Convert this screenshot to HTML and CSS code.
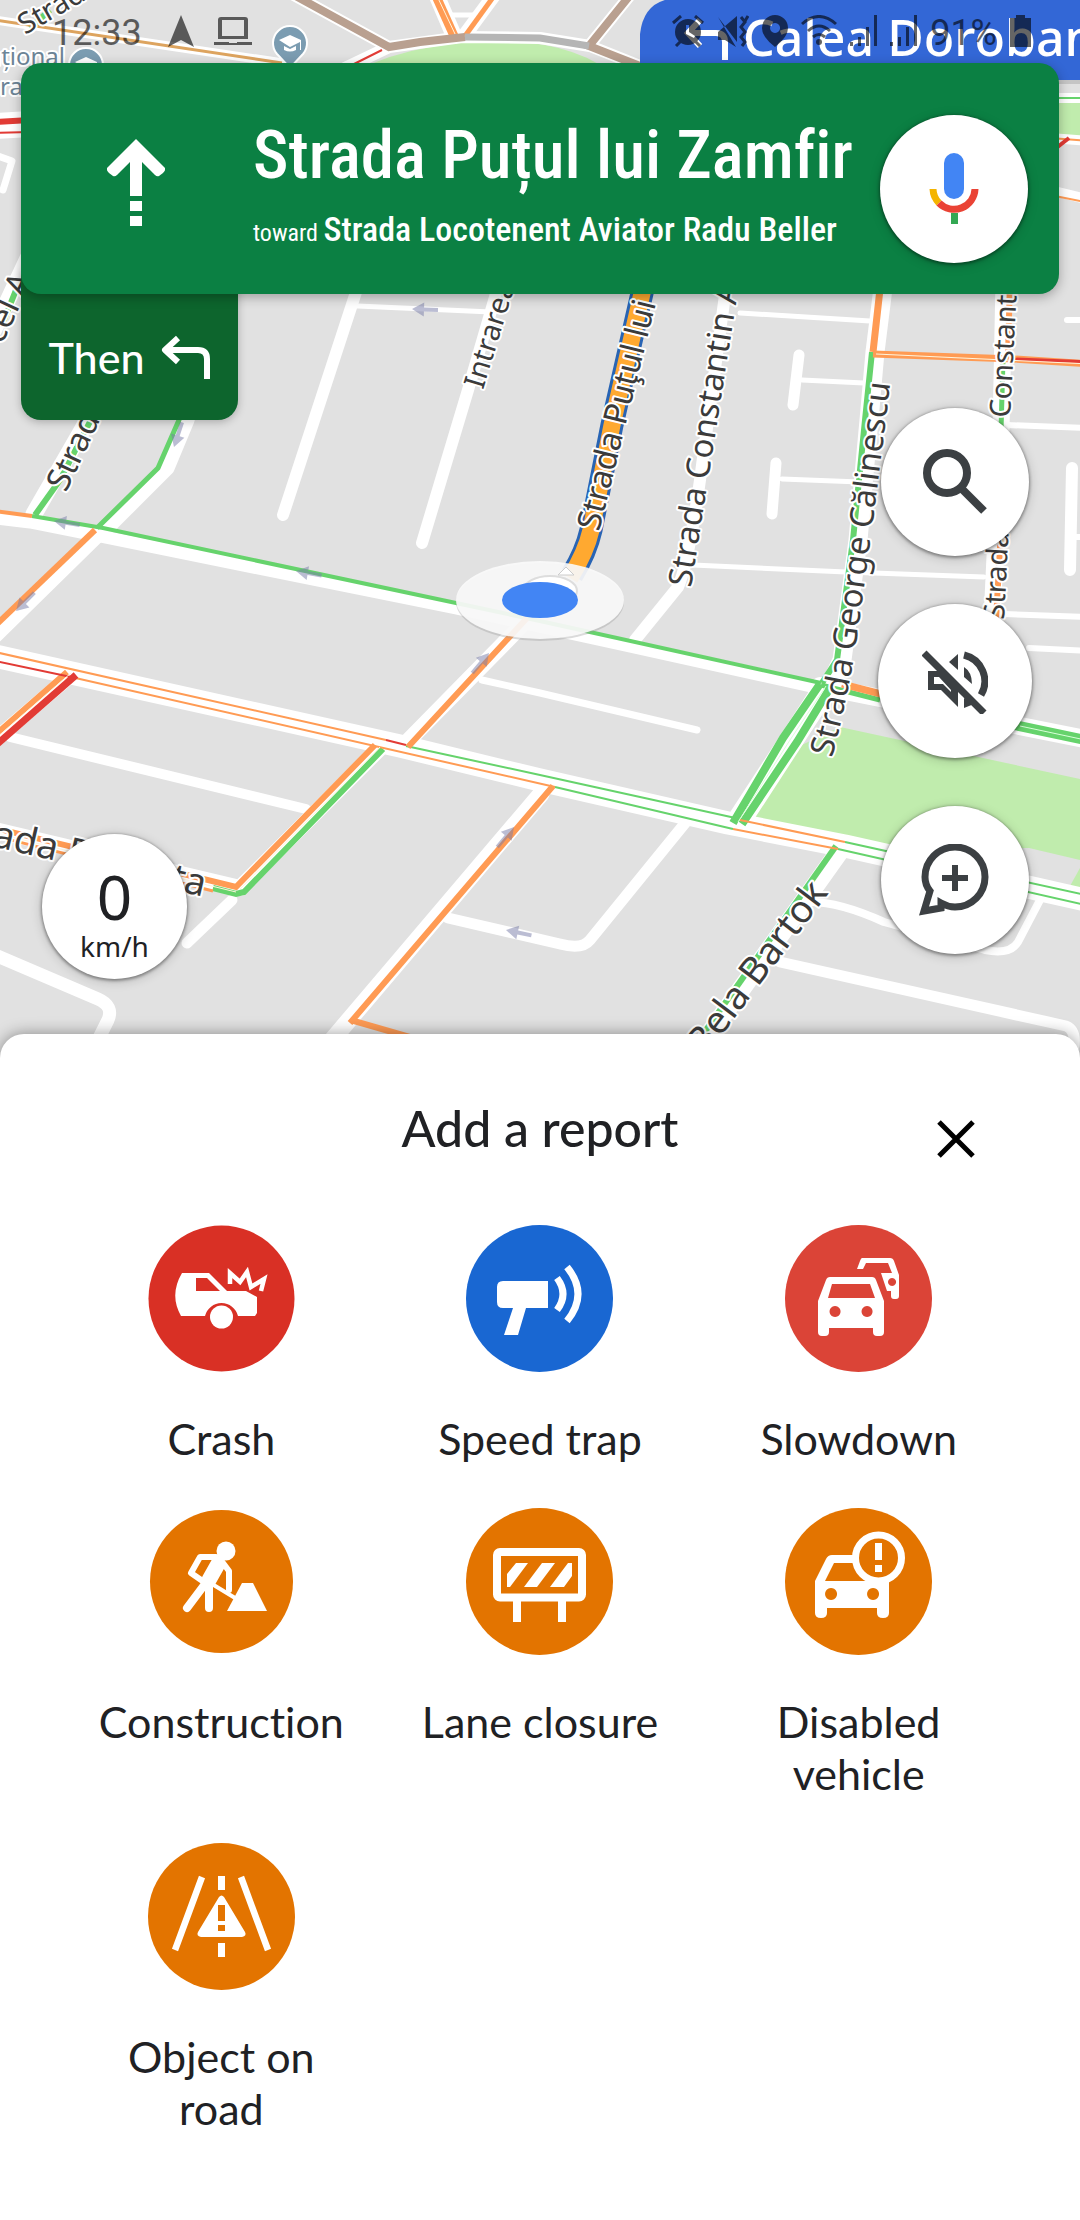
FILE: index.html
```html
<!DOCTYPE html>
<html lang="en">
<head>
<meta charset="utf-8">
<meta name="viewport" content="width=device-width, initial-scale=1">
<title>Navigation – Add a report</title>
<link rel="stylesheet" href="styles.css">
</head>
<body>
<main class="app">
  <section class="map-view" aria-label="Navigation map">
    <svg class="map" viewBox="0 0 1080 1060" preserveAspectRatio="xMidYMin slice" aria-hidden="true">
      <defs>
        <path id="dir" d="M0 0l12-7v5h14v4h-14v5z"/>
        <path id="george" d="M832 758Q847 702 856 645Q874 520 893 360"/>
      </defs>
      <rect width="1080" height="1060" fill="#e1e1e1"/>

      <!-- parks -->
      <g fill="#c0ecad">
        <path d="M340 80Q400 42 500 41Q580 42 620 80z"/>
        <path d="M1050 102h30v34h-30z"/>
        <path d="M840 727L1080 779V860L1029 848L884 850L750 822L791 750z"/>
        <path d="M1080 868l-10 18 10 4z"/>
      </g>

      <!-- streets -->
      <g class="street">
        <path stroke-width="13" d="M-5 518L30 522L100 536L456 608L625 645L820 688"/>
        <path stroke-width="18" d="M820 686L1090 740"/>
        <path stroke-width="23" d="M-5 656L400 746L540 780L728 823L845 846L1090 901"/>
        <path stroke-width="16" d="M527 620L404 745"/>
        <path stroke-width="15" d="M100 533L-5 636"/>
        <path stroke-width="15" d="M210 350L187 420L167 468L102 533"/>
        <path stroke-width="17" d="M120 350L88 420L34 514"/>
        <path stroke-width="16" d="M36 240L-6 330"/>
        <path stroke-width="12" d="M360 280L283 515"/>
        <path stroke-width="12" d="M500 280L468 390L422 543"/>
        <path stroke-width="5" d="M358 306L491 312"/>
        <path stroke-width="12" d="M727 280L700 480Q688 565 678 587L635 640"/>
        <path stroke-width="5" d="M740 313L870 321M802 380L864 383M782 479L860 482M693 565L846 572L984 577"/>
        <path stroke-width="11" d="M799 355L793 405M776 463L772 514"/>
        <path stroke-width="19" d="M884 280L875 352L869 420L858 540L842 660L828 690"/>
        <path stroke-width="17" d="M1004 280L1001 430L992 620"/>
        <path stroke-width="6" d="M1006 425L1090 428M1003 614L1090 617M1029 648L1090 651M1067 320h20M1070 537h20"/>
        <path stroke-width="12" d="M1072 468L1070 570"/>
        <path stroke-width="7" d="M482 680L540 693L697 730"/>
        <path stroke-width="24" d="M824 690L738 822"/>
        <path stroke-width="19" d="M839 852L705 1040"/>
        <path stroke-width="11" d="M448 918L560 944Q582 950 590 940L686 822"/>
        <path stroke-width="17" d="M541 794L332 1040"/>
        <path stroke-width="10" d="M10 737L306 809"/>
        <path stroke-width="15" d="M71 675L-5 740"/>
        <path stroke-width="16" d="M-5 830L240 888L380 748"/>
        <path stroke-width="11" d="M232 900L187 943"/>
        <path stroke-width="13" d="M-5 955L98 999Q114 1006 108 1020L96 1044"/>
        <path stroke-width="8" d="M810 902Q840 902 884 922L985 950Q1010 955 1018 942L1040 900"/>
        <path stroke-width="11" d="M780 962L1066 1026Q1076 1030 1074 1046"/>
        <path stroke-width="9" d="M-5 20L290 64"/>
        <path stroke-width="12" d="M292 -6L389 47L462 37L540 38L590 46L640 66M589 46L631 -6M389 47L345 68"/>
        <path stroke-width="16" d="M436 -6L454 36"/>
        <path stroke-width="14" d="M495 -6L464 36"/>
        <path stroke-width="5" d="M448 15h32"/>
        <path stroke-width="26" d="M-5 126L30 124"/>
        <path stroke-width="7" d="M-5 155L12 161L3 190"/>
        <path stroke-width="10" d="M1050 98h40M1050 138L1090 141M1050 190L1090 200"/>
      </g>

      <!-- live traffic -->
      <g class="traffic green">
        <path stroke-width="4" d="M32 516L103 528L456 603L540 621L821 683"/>
        <path stroke-width="5" d="M200 350L179 420L158 468L97 528"/>
        <path stroke-width="6" d="M96 410L60 480L35 515M16 290L2 325M30 28L50 10"/>
        <path stroke-width="5" d="M821 685L880 700"/>
        <path stroke-width="10" d="M1010 724L1090 741"/>
        <path stroke-width="6" d="M872 352L865 420L853 540L837 660L822 683"/>
        <path stroke-width="8" d="M820 684L783 738L733 823M830 688L797 742L742 824"/>
        <path stroke-width="2" d="M406 746L540 775L740 819M555 787L733 829M845 842L1090 896M838 849L1090 906"/>
        <path stroke-width="6" d="M836 846L699 1040"/>
        <path stroke-width="6" d="M383 749L244 892L236 894L213 888"/>
        <path stroke-width="5" d="M1003 360L1001 430"/>
        <path stroke-width="2" d="M1050 98h40"/>
      </g>
      <g class="traffic orange">
        <path stroke-width="4" d="M-5 511L32 516"/>
        <path stroke-width="6" d="M95 530L-5 626"/>
        <path stroke-width="2" d="M-5 652L386 740M71 677L555 787M740 820L845 842M733 829L838 849"/>
        <path stroke-width="6" d="M527 618L408 747M553 786L350 1023M354 1021L420 1040M67 672L-5 735"/>
        <path stroke-width="6" d="M375 745L236 887L-5 828"/>
        <path stroke-width="3" d="M213 891L-5 836"/>
        <path stroke-width="7" d="M881 280L873 352M842 684L885 695"/>
        <path stroke-width="7" d="M873 354L1014 359L1090 364"/>
        <path stroke-width="6" d="M1010 280L1008 355M1001 530L996 620"/>
        <path stroke-width="9" d="M436 -4L454 36"/>
        <path stroke-width="5" d="M494 -4L465 36"/>
        <path stroke-width="2" d="M1050 138L1090 141M1050 195L1090 203"/>
      </g>
      <g class="traffic red">
        <path stroke-width="2" d="M-5 661L71 677M386 740L406 745M382 50L350 66M-5 133L30 132"/>
        <path stroke-width="7" d="M76 675L-5 746"/>
        <path stroke-width="3" d="M1013 359L1090 362"/>
        <path stroke-width="6" d="M-5 122L30 120"/>
        <path stroke-width="4" d="M1055 149L1069 138"/>
      </g>
      <g fill="none" stroke="#fff4dc">
        <path d="M876 354L1090 364M437 -4L456 36M71 673L-5 739M236 892L-5 833M380 747L240 889"/>
        <path stroke="#d9ffd9" d="M826 686L790 740L738 822M1020 726L1090 741"/>
      </g>
      <path d="M-5 20L282 63" stroke="#dda45f" stroke-width="3" fill="none"/>
      <path d="M292 -6L389 47L420 42L465 37M631 -6L589 46L640 66" stroke="#b9a090" stroke-width="8" fill="none"/>
      <path d="M465 37L540 38L589 46" stroke="#b5b5b5" stroke-width="7" fill="none"/>

      <!-- active route -->
      <path d="M645 280L612 425L591 530Q586 552 572 575" fill="none" stroke="#2864b4" stroke-width="23"/>
      <path d="M645 280L612 425L591 530Q586 552 570 578" fill="none" stroke="#ffa930" stroke-width="17"/>

      <!-- one-way markers -->
      <g fill="#777ca8" fill-opacity=".5">
        <use href="#dir" transform="translate(412 309) rotate(2)"/>
        <use href="#dir" transform="translate(54 521) rotate(9)"/>
        <use href="#dir" transform="translate(296 571) rotate(10)"/>
        <use href="#dir" transform="translate(174 447) rotate(-72)"/>
        <use href="#dir" transform="translate(16 611) rotate(-45)"/>
        <use href="#dir" transform="translate(489 653) rotate(130)"/>
        <use href="#dir" transform="translate(514 827) rotate(130)"/>
        <use href="#dir" transform="translate(506 930) rotate(12)"/>
      </g>

      <!-- street names -->
      <g class="street-name">
        <text transform="translate(599 532) rotate(-76)">Strada Puţul lui</text>
        <text transform="translate(691 588) rotate(-81)">Strada Constantin A</text>
        <text><textPath href="#george">Strada George Călinescu</textPath></text>
        <g class="small">
          <text transform="translate(1010 418) rotate(-87)">Constantin</text>
          <text transform="translate(1004 620) rotate(-87)">Strada</text>
          <text transform="translate(483 390) rotate(-73)">Intrarea</text>
          <text transform="translate(25 35) rotate(-30)">Strada</text>
        </g>
        <text transform="translate(66 493) rotate(-65)">Strada</text>
        <text transform="translate(2 345) rotate(-65)">cel A</text>
        <g class="large">
          <text transform="translate(-9 846) rotate(13)">ada B</text>
          <text transform="translate(169 889) rotate(13)">ta</text>
          <text text-anchor="end" transform="translate(829 893) rotate(-53)">Bela Bartok</text>
        </g>
      </g>
      <g class="place-name">
        <text x="65" y="65" text-anchor="end">ațional</text>
        <text x="0" y="95">rag</text>
      </g>

      <!-- school pins -->
      <g id="pin" fill="#7b9cb1" stroke="#fff" stroke-width="2">
        <path d="M290 68L277 54A17 17 0 1 1 303 54z"/>
        <path stroke="none" fill="#fff" d="M279 40l11-5 11 5v10h-1V42l-10 5zM284 46l6 3 6-3v4q-6 3-12 0z"/>
      </g>
      <use href="#pin" x="-204" y="22"/>

      <!-- next-turn callout -->
      <path d="M640 80V34Q644 -2 680 -2H1090V80z" fill="#3367d6"/>
      <path d="M640 82H1090" stroke="#000" stroke-opacity=".12" stroke-width="4"/>
      <path d="M700 20L688 33L700 46M690 33H716Q725 33 725 42V60" fill="none" stroke="#fff" stroke-width="6"/>
      <text class="callout" x="743" y="56">Calea Dorobanți</text>

      <!-- vehicle position -->
      <ellipse cx="540" cy="602" rx="84" ry="39" fill="#999" fill-opacity=".35"/>
      <ellipse cx="540" cy="600" rx="84" ry="39" fill="#fbfbfb" fill-opacity=".9"/>
      <ellipse cx="550" cy="591" rx="27" ry="15" fill="#fff" stroke="#ddd" stroke-width="2"/>
      <path d="M566 567l8 8h-16z" fill="#fff" stroke="#ccc"/>
      <ellipse cx="540" cy="600" rx="38" ry="18" fill="#4285f4"/>
    </svg>

    <div class="status-bar">
      <div class="status-group">
        <span class="clock">12:33</span>
        <svg class="status-nav" viewBox="0 0 26 32"><path d="M13 0L26 32L13 25L0 32z"/></svg>
        <svg class="status-laptop" viewBox="0 0 38 28"><path fill-rule="evenodd" d="M7 0H31Q34 0 34 3V22H4V3Q4 0 7 0zM8 3V19H30V3zM0 25H15V26H23V25H38V28H0z"/></svg>
      </div>
      <div class="status-group status-right">
        <svg width="32" height="32" viewBox="0 0 32 32"><path fill-rule="evenodd" d="M16 4a13 13 0 1 1 0 26 13 13 0 1 1 0-26zM14 10v9l8 4 1-2-6-4V10z"/><path d="M1 8L9 1M31 8L23 1M4 31l5-5M28 31l-5-5" stroke="#000" stroke-width="3"/></svg>
        <svg width="32" height="32" viewBox="0 0 32 32"><path d="M1 2L20 27V1L1 17V25H8L19 32z"/><path d="M24 2l4 5-4 5 4 5-4 5 4 5-3 4M31 1l-3 5" fill="none" stroke="#000" stroke-width="3"/></svg>
        <svg width="26" height="32" viewBox="0 0 26 32"><path fill-rule="evenodd" d="M13 0A13 13 0 0 1 26 13Q26 22 13 32Q0 22 0 13A13 13 0 0 1 13 0zM13 8a5 5 0 1 0 .1 0z"/></svg>
        <svg width="36" height="32" viewBox="0 0 36 32"><path d="M1 9Q18-6 35 9M7 16Q18 6 29 16M12 22Q18 17 24 22" fill="none" stroke="#000" stroke-width="3"/><circle cx="18" cy="27" r="3"/></svg>
        <svg width="27" height="32" viewBox="0 0 27 32"><path d="M0 27h3v4H0zM8 22h3v9H8zM16 12h3v19h-3zM24 0h3v31h-3z"/></svg>
        <svg width="27" height="32" viewBox="0 0 27 32"><path d="M0 27h3v4H0zM8 22h3v9H8zM16 12h3v19h-3zM24 0h3v31h-3z"/></svg>
        <span class="clock">91%</span>
        <svg width="21" height="32" viewBox="0 0 21 32"><path d="M6 0h9v3h6v29H0V3h6z"/></svg>
      </div>
    </div>

    <header class="banner">
      <svg class="banner-arrow" viewBox="0 0 58 88" aria-label="Continue straight"><path d="M29 0L58 29Q59 31 56 34L52 37Q50 38 48 36L35 23V57H23V23L10 36Q8 38 6 37L2 34Q-1 31 0 29zM23 62h12v10H23zM23 77h12v10H23z" fill="#fff"/></svg>
      <div class="banner-text">
        <h1 class="banner-street">Strada Puțul lui Zamfir</h1>
        <p class="banner-toward">toward <strong>Strada Locotenent Aviator Radu Beller</strong></p>
      </div>
      <button class="fab fab-mic" type="button" aria-label="Voice command">
        <svg width="50" height="72" viewBox="0 0 50 72"><rect x="15" y="0" width="20" height="46" rx="10" fill="#4285f4"/><path d="M4 36A21 21 0 0 0 10 50" fill="none" stroke="#f4b400" stroke-width="7"/><path d="M10 50A21 21 0 0 0 46 36" fill="none" stroke="#ea4335" stroke-width="7"/><path d="M22 60h7v11h-7z" fill="#34a853"/></svg>
      </button>
    </header>

    <div class="map-controls">
      <div class="left-controls">
        <div class="then">
          <span>Then</span>
          <svg width="50" height="44" viewBox="0 0 50 44" aria-label="turn left"><path d="M17 3L4 15L17 27M5 15H37Q46 15 46 24V44" fill="none" stroke="#fff" stroke-width="6" stroke-linejoin="round"/></svg>
        </div>
        <div class="speed"><span class="speed-value">0</span><span class="speed-unit">km/h</span></div>
      </div>
      <div class="right-controls">
        <button class="fab" type="button" aria-label="Search">
          <svg width="64" height="66" viewBox="0 0 64 66"><circle cx="24" cy="24" r="20" fill="none" stroke="#3c4043" stroke-width="8"/><path d="M37 38L61 62" stroke="#3c4043" stroke-width="8"/></svg>
        </button>
        <button class="fab fab-sound" type="button" aria-label="Sound off">
          <svg width="66" height="66" viewBox="0 0 66 66"><path fill-rule="evenodd" d="M6 23H20L36 39V59L19 42H6zM12 29V36H21L29 44V42L17 29z" fill="#3c4043"/><path d="M27 14L36 6V22zM42 19Q50 24 50 36L42 29zM42 50L52 56L42 60z" fill="#3c4043"/><path d="M42 7A27 27 0 0 1 59 47" fill="none" stroke="#3c4043" stroke-width="7"/><path d="M2 5L62 65" stroke="#3c4043" stroke-width="7"/></svg>
        </button>
        <button class="fab" type="button" aria-label="Add a report">
          <svg width="72" height="72" viewBox="0 0 72 72"><path d="M22 64L5 67L11 47Q6 41 6 33A30 30 0 1 1 36 63Q29 63 22 59z" fill="none" stroke="#3c4043" stroke-width="7"/><path d="M36 21V47M23 34H49" stroke="#3c4043" stroke-width="6"/></svg>
        </button>
      </div>
    </div>
  </section>

  <section class="sheet" aria-labelledby="sheet-title">
    <div class="sheet-head">
      <h2 class="sheet-title" id="sheet-title">Add a report</h2>
      <button class="close" type="button" aria-label="Close">
        <svg width="38" height="38" viewBox="0 0 38 38"><path d="M2 2L36 36M36 2L2 36" stroke="#000" stroke-width="5"/></svg>
      </button>
    </div>
    <div class="reports">
      <button class="report" type="button">
        <svg class="report-icon" viewBox="0 0 147 147"><circle cx="73.5" cy="73.5" r="73" fill="#d93025"/><path fill="#fff" fill-rule="evenodd" d="M34 48H61L79 66H98L109 72V88L107 91H90A17 17 0 0 0 57 91H33Q21 70 34 48zM48 53V66H72L59 53z"/><circle cx="73.500" cy="92" r="11.500" fill="#fff"/><path d="M82 59V48L92 57L99 47L103 62L116 54L113 66" fill="none" stroke="#fff" stroke-width="4.500"/></svg>
        <span>Crash</span>
      </button>
      <button class="report" type="button">
        <svg class="report-icon" viewBox="0 0 147 147"><circle cx="73.5" cy="73.5" r="73.500" fill="#1967d2"/><path fill="#fff" d="M37 56H82V83H60L52 110H38L47 83H37Q31 83 31 77V62Q31 56 37 56z"/><path d="M91 53Q103 69 91 85M101 42Q123 69 101 96" fill="none" stroke="#fff" stroke-width="7"/></svg>
        <span>Speed trap</span>
      </button>
      <button class="report" type="button">
        <svg class="report-icon" viewBox="0 0 147 147"><circle cx="73.5" cy="73.5" r="73.500" fill="#db4437"/><path fill="#fff" fill-rule="evenodd" d="M45 52H87Q90 52 91 55L99 76V107Q99 111 95 111H92Q88 111 88 107V103H44V107Q44 111 40 111H37Q33 111 33 107V76L41 55Q42 52 45 52zM47 59L43 73H90L85 59zM50 81a5.500 5.500 0 1 0 .1 0zM82 81a5.500 5.500 0 1 0 .1 0z"/><path fill="#fff" fill-rule="evenodd" d="M77 33H105Q108 33 109 36L114 50V71Q114 74 111 74H109Q106 74 106 71V66H102L96 48H107L103 38H81L78 44H72L75 36Q76 33 77 33zM107 53a4 4 0 1 0 .1 0z"/></svg>
        <span>Slowdown</span>
      </button>
      <button class="report" type="button">
        <svg class="report-icon" viewBox="0 0 147 147"><circle cx="73.5" cy="73.5" r="71.500" fill="#e37400"/><circle cx="78" cy="43" r="9.500" fill="#fff"/><g fill="none" stroke="#fff" stroke-linecap="round" stroke-linejoin="round"><path stroke-width="6" d="M68 49H52L43 65L56 74"/><path stroke-width="15" d="M70 56L61 72"/><path stroke-width="8" d="M57 76L39 100M61 76V100"/><path stroke-width="6" d="M75 55L81 63V82"/><path stroke-width="4" d="M64 76L92 93"/></g><path d="M79 103L94 75H105L119 103z" fill="#fff"/></svg>
        <span>Construction</span>
      </button>
      <button class="report" type="button">
        <svg class="report-icon" viewBox="0 0 147 147"><circle cx="73.5" cy="73.5" r="73.500" fill="#e37400"/><rect x="31" y="44" width="85" height="45.500" rx="3" fill="none" stroke="#fff" stroke-width="8"/><path fill="#fff" d="M41 79V66L50 55H62L44 79zM58 79L76 55H89L71 79zM84 79L102 55H106V68L98 79zM47 92h8v22h-8zM92 92h8v22h-8z"/></svg>
        <span>Lane closure</span>
      </button>
      <button class="report" type="button">
        <svg class="report-icon" viewBox="0 0 147 147"><circle cx="73.5" cy="73.5" r="73.500" fill="#e37400"/><path fill="#fff" fill-rule="evenodd" d="M47 47H75V55H49L40 73H80L104 70V105Q104 110 98 110Q92 110 92 105V100H42V105Q42 110 36 110Q30 110 30 105V73L41 51Q43 47 47 47zM46 80a6 6 0 1 0 .1 0zM88 80a6 6 0 1 0 .1 0z"/><circle cx="93.500" cy="50" r="23" fill="#e37400" stroke="#fff" stroke-width="7"/><path d="M90 35h7v17h-7zM90 57h7v7h-7z" fill="#fff"/></svg>
        <span>Disabled<br>vehicle</span>
      </button>
      <button class="report" type="button">
        <svg class="report-icon" viewBox="0 0 147 147"><circle cx="73.5" cy="73.5" r="73.500" fill="#e37400"/><path d="M54 34L27 107M93 34L120 107" stroke="#fff" stroke-width="6.500"/><path fill="#fff" fill-rule="evenodd" d="M70 33h7v14h-7zM70 100h7v14h-7zM71 54Q73.500 51 76 54L97 89Q99 93 94 94H53Q48 93 50 89zM70 62V78H77V62zM70 82V88H77V82z"/></svg>
        <span>Object on<br>road</span>
      </button>
    </div>
  </section>
</main>
</body>
</html>
```
FILE: styles.css
```css
* {
  box-sizing: border-box;
}

body {
  margin: 0;
  background: #fff;
  color: #202124;
  font-family: Lato, Roboto, sans-serif;
  font-variant-ligatures: none;
}

button {
  border: 0;
  padding: 0;
  background: none;
  color: inherit;
  font: inherit;
  font-variant-ligatures: none;
  cursor: pointer;
}

h1,
h2,
p {
  margin: 0;
}

svg {
  display: block;
  flex: none;
}

.app {
  display: flex;
  flex-direction: column;
  min-height: 100vh;
}

/* Map */
.map-view {
  position: relative;
  overflow: hidden;
  margin-bottom: -24px;
  padding-bottom: 79px;
}

.map {
  position: absolute;
  inset: 0;
  width: 100%;
  height: 100%;
}

.street path {
  fill: none;
  stroke: #fff;
  stroke-linecap: round;
  stroke-linejoin: round;
}

.traffic path {
  fill: none;
}

.green {
  stroke: #66d36c;
}

.orange {
  stroke: #ff9b54;
}

.red {
  stroke: #e23b35;
}

.street-name,
.place-name {
  fill: #3b3b3b;
  stroke: #fff;
  stroke-width: 4px;
  stroke-linejoin: round;
  paint-order: stroke;
  font: 33px "Noto Sans", sans-serif;
}

.street-name .small {
  font-size: 29px;
}

.street-name .large {
  font-size: 38px;
}

.place-name {
  fill: #6c8496;
  font-size: 24px;
}

.callout {
  fill: #fff;
  font: 500 50px "Noto Sans", sans-serif;
}

/* Status bar */
.status-bar {
  position: relative;
  display: flex;
  justify-content: space-between;
  height: 63px;
  padding: 15px 49px 0 52px;
  opacity: .6;
}

.status-group {
  display: flex;
  gap: 20px;
}

.status-right {
  gap: 13px;
}

.clock {
  font: 36px/36px Roboto, sans-serif;
  color: #000;
}

.status-nav {
  width: 26px;
  height: 32px;
  margin-left: 6px;
}

.status-laptop {
  width: 38px;
  height: 32px;
}

/* Direction banner */
.banner {
  position: relative;
  z-index: 1;
  display: flex;
  align-items: center;
  height: 231px;
  margin: 0 21px;
  padding: 0 31px 0 86px;
  border-radius: 20px;
  background: #0b8043;
  box-shadow: 0 3px 12px rgba(0, 0, 0, .3);
  color: #fff;
}

.banner-arrow {
  width: 58px;
  height: 88px;
  margin-top: 8px;
}

.banner-text {
  flex: 1;
  min-width: 0;
  margin-left: 88px;
  padding-top: 20px;
  font-family: "Roboto Condensed", Roboto, sans-serif;
  white-space: nowrap;
}

.banner-street {
  font-size: 67px;
  font-weight: 500;
  line-height: 84px;
}

.banner-toward {
  font-size: 24px;
  line-height: 64px;
}

.banner-toward strong {
  font-size: 34px;
  font-weight: 500;
}

/* Round map buttons */
.fab {
  display: flex;
  flex: none;
  align-items: center;
  justify-content: center;
  width: 148px;
  height: 148px;
  border-radius: 50%;
  background: #fff;
  box-shadow: 0 1px 3px 1px rgba(0, 0, 0, .35), 0 2px 12px rgba(0, 0, 0, .2);
}

.fab-mic {
  margin-top: 20px;
}

.fab-sound {
  width: 154px;
  height: 154px;
}

.map-controls {
  position: relative;
  display: flex;
  justify-content: space-between;
  padding: 0 48px 0 21px;
}

.right-controls {
  display: flex;
  flex-direction: column;
  align-items: center;
  gap: 48px;
  padding-top: 114px;
}

.then {
  display: flex;
  align-items: center;
  justify-content: center;
  gap: 16px;
  width: 217px;
  height: 150px;
  margin-top: -24px;
  padding-top: 24px;
  border-radius: 0 0 20px 20px;
  background: #0d652d;
  box-shadow: 0 2px 8px rgba(0, 0, 0, .25);
  color: #fff;
  font-size: 43px;
  font-weight: 500;
}

.speed {
  display: flex;
  flex-direction: column;
  align-items: center;
  width: 145px;
  height: 145px;
  margin: 414px 0 0 21px;
  padding-top: 30px;
  border-radius: 50%;
  background: #fff;
  box-shadow: 0 1px 3px 1px rgba(0, 0, 0, .35), 0 2px 12px rgba(0, 0, 0, .2);
  font-family: "Noto Sans", sans-serif;
}

.speed-value {
  font-size: 62px;
  line-height: 64px;
}

.speed-unit {
  font-size: 28px;
  line-height: 36px;
}

/* Report sheet */
.sheet {
  position: relative;
  flex: 1;
  padding: 64px 62px;
  border-radius: 24px 24px 0 0;
  background: #fff;
  box-shadow: 0 0 16px rgba(0, 0, 0, .4);
}

.sheet-head {
  display: grid;
  grid-template-columns: 1fr auto 1fr;
  margin-bottom: 67px;
}

.sheet-title {
  grid-column: 2;
  font-size: 50px;
  font-weight: 500;
  line-height: 60px;
}

.close {
  align-self: end;
  justify-self: end;
  margin-right: 43px;
}

.reports {
  display: grid;
  grid-template-columns: repeat(3, 1fr);
  gap: 43px 0;
}

.report {
  display: flex;
  flex-direction: column;
  align-items: center;
  gap: 41px;
  font-size: 43px;
  line-height: 52px;
}

.report-icon {
  width: 147px;
  height: 147px;
}
```
